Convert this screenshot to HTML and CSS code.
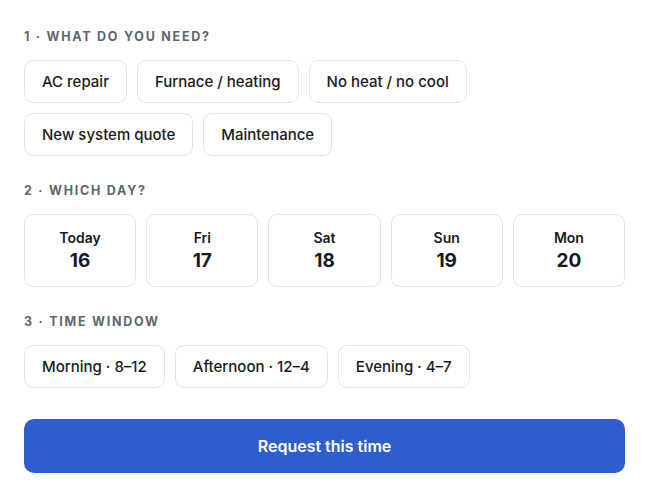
FILE: index.html
```html
<!DOCTYPE html>
<html lang="en">
    <head>
        <meta charset="UTF-8" />
        <meta name="viewport" content="width=device-width, initial-scale=1.0" />
        <title>Book a visit</title>
        <link rel="stylesheet" href="styles.css">
    </head>
    <body>
        <div id="booking">

        <div class="section">
            <div class="label">1 · What do you need?</div>
            <div class="chips">
                <button class="chip">AC repair</button>
                <button class="chip">Furnace / heating</button>
                <button class="chip">No heat / no cool</button>
                <button class="chip">New system quote</button>
                <button class="chip">Maintenance</button>
            </div>
        </div>

        <div class="section">
            <div class="label">2 · Which day?</div>
            <div class="days">
                <button class="day"><span class="dayName">Today</span><span class="dayNum">16</span></button>
                <button class="day"><span class="dayName">Fri</span><span class="dayNum">17</span></button>
                <button class="day"><span class="dayName">Sat</span><span class="dayNum">18</span></button>
                <button class="day"><span class="dayName">Sun</span><span class="dayNum">19</span></button>
                <button class="day"><span class="dayName">Mon</span><span class="dayNum">20</span></button>
            </div>
        </div>

        <div class="section">
            <div class="label">3 · Time window</div>
            <div class="chips">
                <button class="chip">Morning · 8–12</button>
                <button class="chip">Afternoon · 12–4</button>
                <button class="chip">Evening · 4–7</button>
            </div>
        </div>

        <button id="requestBtn">Request this time</button>

        </div>
    </body>
</html>
```

FILE: styles.css
```css
body {
  margin: 0;
  background: white;
  font-family: Inter, "Noto Sans", sans-serif;
  color: #1a1a1a;
}

#booking {
  padding: 28px 25px 0 24px;
}

.section {
  margin-bottom: 26px;
}

.label {
  font-size: 12.5px;
  line-height: 17px;
  font-weight: 700;
  letter-spacing: 1.75px;
  text-transform: uppercase;
  color: #5c666e;
  margin-bottom: 15px;
}

.chips {
  display: flex;
  flex-wrap: wrap;
  gap: 10px 10px;
}

button {
  font-family: inherit;
  color: inherit;
  background: white;
  border: 1px solid #e3e3e3;
  border-radius: 9px;
  cursor: pointer;
}

.chip {
  font-size: 15px;
  line-height: 19px;
  font-weight: 500;
  padding: 11px 17px;
}

.days {
  display: grid;
  grid-template-columns: repeat(5, 1fr);
  gap: 10px;
}

.day {
  display: flex;
  flex-direction: column;
  align-items: center;
  gap: 2px;
  padding: 14px 0 13px;
}

.dayName {
  font-size: 14px;
  line-height: 18px;
  font-weight: 600;
}

.dayNum {
  font-size: 19px;
  line-height: 24px;
  font-weight: 700;
}

#requestBtn {
  display: block;
  width: 100%;
  margin-top: 31px;
  height: 54px;
  border: none;
  border-radius: 10px;
  background: #2f5dcd;
  color: white;
  font-size: 16px;
  font-weight: 600;
}
```
